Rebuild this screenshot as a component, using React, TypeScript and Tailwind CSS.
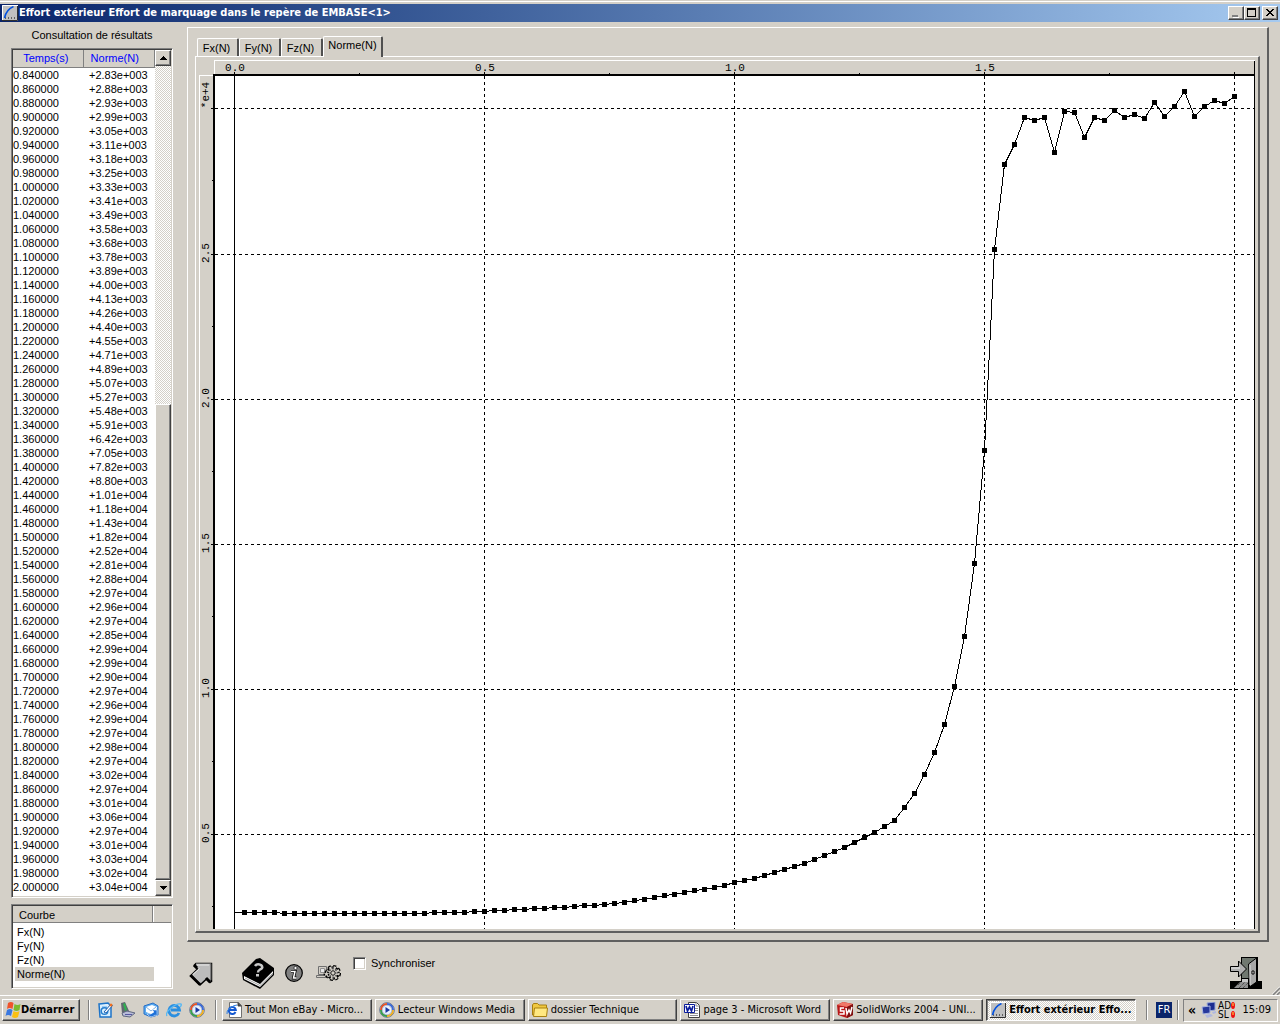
import type { ReactNode } from "react";
import clsx from "clsx";

const RAISED =
  "border border-t-white border-l-white border-r-[#404040] border-b-[#404040] shadow-[inset_-1px_-1px_0_#808080] bg-[#d4d0c8]";
const SUNKEN =
  "border border-t-[#808080] border-l-[#808080] border-r-white border-b-white shadow-[inset_1px_1px_0_#404040,inset_-1px_-1px_0_#d4d0c8] bg-white";
const PANEL =
  "border-t border-l border-r-2 border-b-2 border-t-white border-l-white border-r-[#606060] border-b-[#606060]";
const TAHOMA = "font-['DejaVu_Sans_Condensed','DejaVu_Sans',sans-serif]";

// Force norm in newtons, one sample every 0.02 s
const SAMPLES = [
  2311, 2311, 2311, 2311, 2311, 2276, 2276, 2276, 2276, 2276, 2276, 2276, 2276, 2276, 2276, 2276,
  2276, 2276, 2276, 2276, 2300, 2311, 2311, 2320, 2335, 2345, 2360, 2380, 2395, 2415, 2430, 2450,
  2470, 2490, 2510, 2535, 2560, 2590, 2625, 2665, 2710, 2770, 2830, 2880, 2930, 2990, 3050, 3110,
  3180, 3250, 3330, 3410, 3490, 3580, 3680, 3780, 3890, 4000, 4130, 4260, 4400, 4550, 4710, 4890,
  5070, 5270, 5480, 5910, 6420, 7050, 7820, 8800, 10100, 11820, 14330, 18220, 25150, 28060, 28750,
  29690, 29590, 29690, 28490, 29900, 29860, 29010, 29690, 29590, 29930, 29690, 29790, 29660, 30210,
  29730, 30070, 30590, 29730, 30070, 30280, 30160, 30410,
];
const FIRST_VISIBLE = 42;

const px = (i: number) => 234.5 + i * 10;
const py = (v: number) => Math.round(979 - v * 0.02903) + 0.5;

function formatForce(value: number) {
  const [mantissa, exponent] = value.toExponential(2).split("e+");
  return `+${mantissa}e+${exponent.padStart(3, "0")}`;
}

function CurveIcon() {
  return (
    <svg viewBox="0 0 16 16" className="size-4 shrink-0" aria-hidden="true">
      <rect width="16" height="16" fill="#c0c0c0" />
      <path d="M3 13h11" stroke="#000" strokeDasharray="1 2" />
      <path d="M2.5 13c1-5 3-9 9-11.500" fill="none" stroke="#0050e0" strokeWidth="1.5" />
      <path d="M.5 16V.5H16" fill="none" stroke="#fff" />
      <path d="M0 15.5h15.5V1" fill="none" stroke="#303030" />
    </svg>
  );
}

function TitleButton({ label, children }: { label: string; children: ReactNode }) {
  return (
    <button type="button" aria-label={label} className={clsx("h-[14px] w-4", RAISED)}>
      <svg viewBox="0 0 14 12" className="h-3 w-[14px]" shapeRendering="crispEdges">
        {children}
      </svg>
    </button>
  );
}

function TitleBar() {
  return (
    <header className="mt-[2px] flex h-[18px] items-center bg-linear-to-r from-[#0a246a] to-[#a6caf0] px-[2px]">
      <CurveIcon />
      <h1 className={clsx("ml-px grow text-[11px] leading-4 font-bold whitespace-nowrap text-white", TAHOMA)}>
        Effort extérieur Effort de marquage dans le repère de EMBASE&lt;1&gt;
      </h1>
      <TitleButton label="Réduire">
        <path d="M3 9h6" stroke="#808080" strokeWidth="2" />
        <path d="M4 10.5h6" stroke="#fff" />
      </TitleButton>
      <TitleButton label="Agrandir">
        <path d="M2.5 2v7.5h8V2" fill="none" stroke="#000" />
        <path d="M2 2h9" stroke="#000" strokeWidth="2" />
      </TitleButton>
      <div className="ml-[2px] flex">
        <TitleButton label="Fermer">
          <path d="M3 2h2v1h1v1h2v-1h1v-1h2v1h-1v1h-1v1h-1v1h1v1h1v1h1v1h-2v-1h-1v-1h-2v1h-1v1h-2v-1h1v-1h1v-1h1v-1h-1v-1h-1v-1h-1z" />
        </TitleButton>
      </div>
    </header>
  );
}

function ScrollBar() {
  return (
    <div className="flex w-4 shrink-0 flex-col bg-[repeating-conic-gradient(#d4d0c8_0_25%,#fff_0_50%)] bg-[length:2px_2px]">
      <button type="button" aria-label="Défiler vers le haut" className={clsx("flex h-4 items-center justify-center", RAISED)}>
        <svg viewBox="0 0 7 4" className="h-1 w-[7px]" shapeRendering="crispEdges">
          <path d="M3 0h1v1h1v1h1v1h1v1H0V3h1V2h1V1h1z" />
        </svg>
      </button>
      <div className="grow" />
      <div className={clsx("h-[476px]", RAISED)} />
      <button type="button" aria-label="Défiler vers le bas" className={clsx("flex h-4 items-center justify-center", RAISED)}>
        <svg viewBox="0 0 7 4" className="h-1 w-[7px]" shapeRendering="crispEdges">
          <path d="M0 0h7v1H6v1H5v1H4v1H3V3H2V2H1V1H0z" />
        </svg>
      </button>
    </div>
  );
}

function ResultsTable() {
  return (
    <div className={clsx("flex min-h-[850px] p-px", SUNKEN)}>
      <table className="grow table-fixed border-collapse self-start text-left">
        <thead className="bg-[#d4d0c8] text-center text-[#0000ff]">
          <tr className="h-[17px]">
            <th className="w-[70px] border-r border-b border-[#808080] p-0 pr-1 font-normal">Temps(s)</th>
            <th className="border-r border-b border-l border-r-[#808080] border-b-[#808080] border-l-white p-0 pr-2 font-normal">
              Norme(N)
            </th>
          </tr>
        </thead>
        <tbody>
          {SAMPLES.slice(FIRST_VISIBLE).map((value, i) => (
            <tr key={i} className="h-[14px]">
              <td className="p-0">{((i + FIRST_VISIBLE) * 0.02).toFixed(6)}</td>
              <td className="p-0 pl-[6px]">{formatForce(value)}</td>
            </tr>
          ))}
        </tbody>
      </table>
      <ScrollBar />
    </div>
  );
}

function CurveList() {
  return (
    <div className={clsx("mt-[6px] h-[85px] p-px", SUNKEN)}>
      <div className="flex h-[17px] border-b border-[#808080] bg-[#d4d0c8]">
        <div className="w-[140px] border-r border-[#808080] pl-[6px] leading-[18px]">Courbe</div>
        <div className="border-l border-white" />
      </div>
      <ul className="mt-[2px] mr-[17px] ml-[2px] leading-[14px]">
        {["Fx(N)", "Fy(N)", "Fz(N)", "Norme(N)"].map((name) => (
          <li key={name} className={clsx("pl-[2px]", name === "Norme(N)" && "bg-[#d4d0c8]")}>
            {name}
          </li>
        ))}
      </ul>
    </div>
  );
}

function Tab({ label, active }: { label: string; active?: boolean }) {
  return (
    <button
      type="button"
      role="tab"
      aria-selected={!!active}
      className={clsx(
        "rounded-t-[2px] border-t border-l border-white border-r-2 border-r-[#505050] text-center",
        active ? "-mb-px h-[21px] w-[60px] bg-[#d4d0c8] pb-1" : "h-[18px] w-[42px] pr-[2px]"
      )}
    >
      {label}
    </button>
  );
}

function Chart() {
  const majors = [0, 1, 2, 3, 4];
  return (
    <svg
      viewBox="199 60 1056 869"
      className="block h-auto w-full font-['Liberation_Mono',monospace] text-[11px]"
      role="img"
      aria-label="Norme(N)"
    >
      <g shapeRendering="crispEdges" fill="none" stroke="#000">
        <rect x="215" y="76" width="1040" height="853" fill="#fff" stroke="none" />
        <path d="M214.5 75V60.5H1255M199.5 929V75.5H214" stroke="#fff" />
        <path d="M214 75H1255M214 929V74" strokeWidth="2" />
        <path d="M1254.5 61V929M234.5 72V929" />
        {majors.slice(1).map((n) => (
          <g key={n}>
            <path d={`M${234.5 + n * 250} 76V929`} strokeDasharray="3 3" />
            <path d={`M${234.5 + n * 250} 72V76`} />
          </g>
        ))}
        {majors.slice(0, 4).map((n) => (
          <path key={n} d={`M${359.5 + n * 250} 73V75`} />
        ))}
        {[108.5, 254.5, 399.5, 544.5, 689.5, 834.5].map((y) => (
          <g key={y}>
            <path d={`M215 ${y}H1254`} strokeDasharray="3 3" />
            <path d={`M211 ${y}H214M212 ${y + 72}H214`} />
          </g>
        ))}
        <polyline points={SAMPLES.map((v, i) => `${px(i)},${py(v)}`).join(" ")} />
      </g>
      <g shapeRendering="crispEdges">
        {SAMPLES.map((v, i) => i > 0 && <rect key={i} x={px(i) - 2.5} y={py(v) - 2.5} width="5" height="5" />)}
      </g>
      <g textAnchor="middle">
        {["0.0", "0.5", "1.0", "1.5"].map((label, n) => (
          <text key={label} x={235 + n * 250} y="71">
            {label}
          </text>
        ))}
        {["0.5", "1.0", "1.5", "2.0", "2.5"].map((label, n) => (
          <text key={label} transform={`translate(209 ${833 - n * 145}) rotate(-90)`}>
            {label}
          </text>
        ))}
        <text transform="translate(209 95) rotate(-90)">*e+4</text>
      </g>
    </svg>
  );
}

function Toolbar() {
  return (
    <div className="flex h-[53px] items-start pr-[7px] pl-[2px]">
      <button type="button" aria-label="Retour" className="mt-[19px]">
        <svg viewBox="0 0 24 26" className="h-[26px] w-6">
          <path d="M5 4.500L7 2.500h15.500V21M5 4.500l3.500 3.500-7 7L11 24l6.500-6 3.500 3.500 1.500-1" fill="#bcbcbc" stroke="#000" strokeWidth="1.500" />
          <path d="M1.500 14L11 23.500M17 17l4 4M5 4l3 3" fill="none" stroke="#000" strokeWidth="3" />
          <path d="M7 3h14.500v15l-4-3.500-6.500 7-8-8L10.500 7z" fill="#bcbcbc" />
          <path d="M7 2.500h15V19" fill="none" stroke="#606060" />
          <path d="M8 4h12M4 13.500L10.500 7.500" fill="none" stroke="#e8e8e8" />
        </svg>
      </button>
      <button type="button" aria-label="Aide" className="mt-4 ml-[29px]">
        <svg viewBox="0 0 33 31" className="h-[31px] w-[33px]">
          <path d="M0 15L14 1l4-1 14 10v7L18 31 1 22z" fill="#000" />
          <path d="M2 18l16 8 13-13v3L18 29 2 21z" fill="#fff" />
          <path d="M3 20l15 7.500L31 15" fill="none" stroke="#a0a0a0" />
          <path d="M13 8q2-3 6-1 3 3-1 4.500-2 1-2 3" fill="none" stroke="#c8c8c8" strokeWidth="2.500" />
          <path d="M14 16h3v2.500h-3z" fill="#c8c8c8" />
        </svg>
      </button>
      <button type="button" aria-label="Informations" className="mt-[22px] ml-[10px]">
        <svg viewBox="0 0 18 18" className="size-[18px]">
          <circle cx="9" cy="9" r="8.300" fill="#808080" stroke="#000" strokeWidth="1.200" />
          <path d="M6 7.500h4L8.500 14h3" fill="none" stroke="#000" strokeWidth="3" />
          <path d="M6 7.500h4L8.500 14h3" fill="none" stroke="#fff" strokeWidth="1.500" />
          <circle cx="10.500" cy="4" r="1.600" fill="#fff" stroke="#000" strokeWidth=".6" />
        </svg>
      </button>
      <button type="button" aria-label="Options" className="mt-[22px] ml-[13px]">
        <svg viewBox="0 0 25 18" className="h-[18px] w-[25px]">
          <path d="M2.500 2.500h8v8h-8zM.5 11.500h11v2H.5z" fill="#d4d0c8" stroke="#707070" />
          <path d="M4.500 4.500h4v4h-4z" fill="#e8e8e8" stroke="#909090" />
          <circle cx="17" cy="9" r="6.800" fill="#000" stroke="#000" strokeWidth="2.500" strokeDasharray="3 2.340" />
          <circle cx="17" cy="9" r="5.500" fill="none" stroke="#d4d0c8" strokeWidth="2.500" strokeDasharray="2.200 2.120" />
          <circle cx="17" cy="9" r="4.300" fill="#d4d0c8" />
          <path d="M13 5l8 8M21 5l-8 8M17 3v12M11.500 9h11" stroke="#707070" />
          <circle cx="17" cy="9" r="2.200" fill="#d4d0c8" stroke="#202020" />
          <circle cx="10.500" cy="10" r="2.200" fill="#d4d0c8" stroke="#000" strokeWidth="1.500" strokeDasharray="1.500 1" />
        </svg>
      </button>
      <label className="mt-[14px] ml-3 flex items-center gap-[5px] leading-[14px]">
        <input type="checkbox" className={clsx("size-[13px] appearance-none", SUNKEN)} />
        Synchroniser
      </label>
      <button type="button" aria-label="Quitter" className="mt-[15px] ml-auto">
        <svg viewBox="0 0 32 32" className="size-8">
          <path d="M0 24h32v8H0z" />
          <path d="M11 0h17v27H11z" fill="#000" />
          <path d="M12 1h14v20H12z" fill="#707870" />
          <path d="M12 22h6v3h-6z" fill="#c8c8c8" />
          <path d="M10 25h8v6H4z" fill="#909090" />
          <path d="M8 28l3-3M9 31l6-6M13 31l5-5" stroke="#303030" strokeDasharray="1 1" />
          <path d="M18.500 7l8-6v24l-7 5z" fill="#a8a8a8" stroke="#000" />
          <path d="M20 8v20" stroke="#e0e0e0" />
          <path d="M22 14h2v3h-2z" fill="#fff" stroke="#000" />
          <path d="M.5 9.500h8v-5.500l8 8-8 8v-5.500h-8z" fill="#b0b0b0" stroke="#000" />
          <path d="M1 11h9" stroke="#eee" />
        </svg>
      </button>
    </div>
  );
}

function WindowsFlag() {
  return (
    <svg viewBox="0 0 16 16" className="size-4 shrink-0" aria-hidden="true">
      <path d="M3 1q3-2 5.500 0L7.500 7q-3-2-5.500 0z" fill="#f0532a" />
      <path d="M9.500 2q3 2 6 0L14.500 8q-3 2-6 0z" fill="#7cba2c" />
      <path d="M2 8q3-2 5.500 0L6 14q-3-2-5.500 0z" fill="#3a78e0" />
      <path d="M8.500 9q3 2 6 0L13 15q-3 2-6 0z" fill="#fbc012" />
    </svg>
  );
}

function OutlookIcon() {
  return (
    <svg viewBox="0 0 16 16" className="size-4" aria-hidden="true">
      <path d="M2 2l9-1 3 3v11H3z" fill="#d8efff" stroke="#1c73c8" strokeWidth="1.500" />
      <path d="M5 5h5" stroke="#60a8e8" />
      <circle cx="7.500" cy="9" r="3.300" fill="none" stroke="#2880d0" strokeWidth="1.500" />
      <path d="M7 10l7-8 1.500 1.500L9 11z" fill="#fff" stroke="#1c60b0" />
      <circle cx="14" cy="3" r="1.500" fill="#f07020" />
    </svg>
  );
}

function ScannerIcon() {
  return (
    <svg viewBox="0 0 16 16" className="size-4" aria-hidden="true">
      <path d="M1 1l4-1 4 9-3 4-4-2z" fill="#606870" />
      <path d="M3 2l2-1 2 7-2 1z" fill="#30b050" />
      <path d="M2 11l5-2 8 2-5 4-7-1z" fill="#b8bcd8" stroke="#606880" />
      <path d="M5 12.500h7" stroke="#5858a0" />
    </svg>
  );
}

function MailIcon() {
  return (
    <svg viewBox="0 0 16 16" className="size-4" aria-hidden="true">
      <path d="M1 4l9-3 5 3v9l-7 2-7-3z" fill="#5aaaf0" stroke="#2870c8" />
      <path d="M3 5l6-2 5 2-1 5-5 2-5-2z" fill="#fff" />
      <path d="M3 5l5 4 5-4" fill="none" stroke="#80b0e0" />
      <path d="M14 14V8H9l2 2q-3 3-7 2 4 5 8 1z" fill="#1c70d8" stroke="#fff" strokeWidth=".5" />
    </svg>
  );
}

function ExplorerIcon() {
  return (
    <svg viewBox="0 0 16 16" className="size-4" aria-hidden="true">
      <path d="M13 11a5.300 5.300 0 1 1 .5-3H5" fill="none" stroke="#2b8fe0" strokeWidth="2.800" />
      <path d="M1 14Q-1 11 5 6t10-4q1 1-1 3" fill="none" stroke="#58b8f4" strokeWidth="1.300" />
    </svg>
  );
}

function MediaIcon() {
  return (
    <svg viewBox="0 0 16 16" className="size-4 shrink-0" aria-hidden="true">
      <circle cx="8" cy="8" r="7.300" fill="#fff" stroke="#607090" />
      <path d="M8 2a6 6 0 0 0-6 6" fill="none" stroke="#e85020" strokeWidth="2" />
      <path d="M8 2a6 6 0 0 1 6 6" fill="none" stroke="#3868d8" strokeWidth="2" />
      <path d="M14 8a6 6 0 0 1-6 6" fill="none" stroke="#f0b020" strokeWidth="2" />
      <path d="M2 8a6 6 0 0 0 6 6" fill="none" stroke="#38a048" strokeWidth="2" />
      <circle cx="8" cy="8" r="4.800" fill="#e8f0fc" stroke="#8090b8" strokeWidth=".6" />
      <path d="M6.500 5L11 8l-4.500 3z" fill="#1838a0" />
    </svg>
  );
}

function PageIcon() {
  return (
    <svg viewBox="0 0 16 16" className="size-4 shrink-0" aria-hidden="true">
      <path d="M3.500.5h9l3 3v12h-12z" fill="#fff" stroke="#707070" />
      <path d="M12 .5V4h3.500" fill="#404040" stroke="#404040" />
      <path d="M9.500 10a3.500 3.500 0 1 1 .3-2H4" fill="none" stroke="#1458d0" strokeWidth="2" />
      <path d="M1 12q-1-3 3-6t7-3" fill="none" stroke="#3080e0" />
    </svg>
  );
}

function FolderIcon() {
  return (
    <svg viewBox="0 0 16 16" className="size-4 shrink-0" aria-hidden="true">
      <path d="M.5 13V3l1-1.500h4L7 3h7.500v10z" fill="#f0c840" stroke="#a88010" />
      <path d="M1.500 14.500l1-8.500h13l-1 8.500z" fill="#ffe880" stroke="#a88010" />
    </svg>
  );
}

function WordIcon() {
  return (
    <svg viewBox="0 0 16 16" className="size-4 shrink-0" aria-hidden="true">
      <path d="M4.500.5h8l3 3v12h-11z" fill="#fff" stroke="#404040" />
      <path d="M12 .5V4h3.500M11 6.500h3M11 8.500h3M6 11.500h8M6 13.500h8" fill="none" stroke="#909090" />
      <path d="M.5 2.500h10v8H.5z" fill="#fff" stroke="#0a1c9c" />
      <path d="M2 4l1.500 5 2-4 2 4L9 4" fill="none" stroke="#0a1c9c" strokeWidth="1.700" />
    </svg>
  );
}

function SolidWorksIcon() {
  return (
    <svg viewBox="0 0 16 16" className="size-4 shrink-0" aria-hidden="true">
      <path d="M0 3l6-3 10 2v11l-6 3L1 13z" fill="#b81818" />
      <path d="M0 3l6-3 10 2-6 3z" fill="#f07868" />
      <path d="M10 5l6-3v11l-6 3z" fill="#801010" />
      <path d="M7 6H3.500v3H7v3H2.500M9 6l1 6 2-4 1.500 3L15 5" fill="none" stroke="#fff" strokeWidth="1.500" />
    </svg>
  );
}

function NetworkIcon() {
  return (
    <svg viewBox="0 0 16 16" className="size-4" aria-hidden="true">
      <path d="M6 1l8-1v8l-7 1z" fill="#1c2c90" stroke="#98a8d8" />
      <path d="M1 5l8-1v7l-7 1z" fill="#26389c" stroke="#a8b4e0" />
      <path d="M4 13l6-1 2 2-6 2zM11 10l4-1v2l-3 1z" fill="#b0b8e0" />
    </svg>
  );
}

function LockLight() {
  return (
    <svg viewBox="0 0 4 7" className="h-[7px] w-1" aria-hidden="true">
      <ellipse cx="2" cy="3.500" rx="2" ry="3.500" fill="#f01010" />
      <path d="M2 1v3" stroke="#ffe040" />
    </svg>
  );
}

function Divider() {
  return <div className="h-5 w-[2px] shrink-0 border-r border-l border-r-white border-l-[#808080]" />;
}

const TASKS = [
  { label: "Tout Mon eBay - Micro...", icon: <PageIcon /> },
  { label: "Lecteur Windows Media", icon: <MediaIcon /> },
  { label: "dossier Technique", icon: <FolderIcon /> },
  { label: "page 3 - Microsoft Word", icon: <WordIcon /> },
  { label: "SolidWorks 2004 - UNI...", icon: <SolidWorksIcon /> },
  { label: "Effort extérieur Effo...", icon: <CurveIcon />, active: true },
];

const QUICK_LAUNCH = [
  { label: "Outlook", icon: <OutlookIcon /> },
  { label: "Scanner", icon: <ScannerIcon /> },
  { label: "Courrier", icon: <MailIcon /> },
  { label: "Internet Explorer", icon: <ExplorerIcon /> },
  { label: "Lecteur", icon: <MediaIcon /> },
];

function Taskbar() {
  return (
    <footer className={clsx("flex h-[29px] items-center border-t border-white px-[2px]", TAHOMA)}>
      <button type="button" className={clsx("flex h-[22px] w-[78px] items-center pl-[2px] font-bold", RAISED)}>
        <WindowsFlag />
        Démarrer
      </button>
      <div className="ml-2">
        <Divider />
      </div>
      <div className="ml-[7px] flex gap-[7px]">
        {QUICK_LAUNCH.map(({ label, icon }) => (
          <button key={label} type="button" aria-label={label}>
            {icon}
          </button>
        ))}
      </div>
      <div className="mr-[5px] ml-[10px]">
        <Divider />
      </div>
      <div className="flex grow gap-[3px]">
        {TASKS.map(({ label, icon, active }) => (
          <button
            key={label}
            type="button"
            className={clsx(
              "flex h-[22px] min-w-0 flex-1 items-center gap-[3px] overflow-hidden pl-[3px] whitespace-nowrap",
              active
                ? "border border-t-[#404040] border-r-white border-b-white border-l-[#404040] bg-[repeating-conic-gradient(#d4d0c8_0_25%,#fff_0_50%)] bg-[length:2px_2px] font-bold shadow-[inset_1px_1px_0_#808080]"
                : RAISED
            )}
          >
            {icon}
            {label}
          </button>
        ))}
      </div>
      <div className="ml-[10px]">
        <Divider />
      </div>
      <button type="button" className="ml-2 size-4 bg-[#0a246a] text-center leading-4 text-white">
        FR
      </button>
      <div className="mr-1 ml-[5px]">
        <Divider />
      </div>
      <div className="flex h-[23px] w-[95px] items-center border border-t-[#808080] border-r-white border-b-white border-l-[#808080] pl-1">
        <span className="w-[13px] text-sm leading-4 font-bold">«</span>
        <NetworkIcon />
        <div className="ml-px grid grid-cols-[13px_4px] items-center text-[10px] leading-[9px]">
          <span>AD</span>
          <LockLight />
          <span>SL</span>
          <LockLight />
        </div>
        <time className="mr-[6px] ml-auto">15:09</time>
      </div>
    </footer>
  );
}

export default function App() {
  return (
    <div className="flex min-h-screen flex-col bg-[#d4d0c8] pt-px font-['Liberation_Sans',Arial,sans-serif] text-[11px] leading-[14px] text-black">
      <div className="border-t border-white" />
      <TitleBar />
      <main className="relative flex grow">
        <aside className="ml-[11px] w-[162px] shrink-0">
          <h2 className="pt-[6px] pb-[6px] text-center">Consultation de résultats</h2>
          <ResultsTable />
          <CurveList />
        </aside>
        <section className="mr-[11px] ml-[14px] min-w-0 grow pt-[5px]">
          <div className={clsx("px-[7px] pt-2 pb-[7px]", PANEL)}>
            <div role="tablist" className="flex h-5 items-end pl-[2px]">
              <Tab label="Fx(N)" />
              <Tab label="Fy(N)" />
              <Tab label="Fz(N)" />
              <Tab label="Norme(N)" active />
            </div>
            <div className={clsx("px-[3px] pt-[3px] pb-[2px]", PANEL)}>
              <Chart />
            </div>
          </div>
          <Toolbar />
        </section>
        <svg viewBox="0 0 8 10" className="absolute right-0 bottom-0 h-[10px] w-2" aria-hidden="true">
          <path d="M0 9.500L8 1.500M4 9.500l4-4" stroke="#fff" />
          <path d="M1 10l7-7M5 10l3-3" stroke="#808080" strokeWidth="1.500" />
        </svg>
      </main>
      <Taskbar />
    </div>
  );
}
